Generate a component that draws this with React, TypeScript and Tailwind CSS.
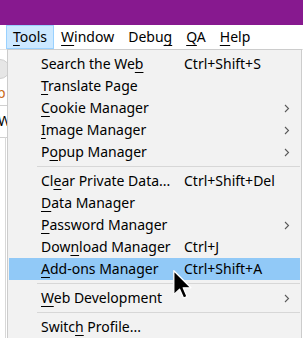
import React from 'react';

type Item =
  | { sep: true }
  | { sep?: false; label: React.ReactNode; shortcut?: string; sub?: boolean; active?: boolean };

const U = ({ children }: { children: React.ReactNode }) => (
  <span className="underline decoration-1 underline-offset-[3px]">{children}</span>
);

const items: Item[] = [
  { label: <>Search the We<U>b</U></>, shortcut: 'Ctrl+Shift+S' },
  { label: <><U>T</U>ranslate Page</> },
  { label: <><U>C</U>ookie Manager</>, sub: true },
  { label: <><U>I</U>mage Manager</>, sub: true },
  { label: <>P<U>o</U>pup Manager</>, sub: true },
  { sep: true },
  { label: <>Cl<U>e</U>ar Private Data...</>, shortcut: 'Ctrl+Shift+Del' },
  { label: <><U>D</U>ata Manager</> },
  { label: <><U>P</U>assword Manager</>, sub: true },
  { label: <>Dow<U>n</U>load Manager</>, shortcut: 'Ctrl+J' },
  { label: <><U>A</U>dd-ons Manager</>, shortcut: 'Ctrl+Shift+A', active: true },
  { sep: true },
  { label: <><U>W</U>eb Development</>, sub: true },
  { sep: true },
  { label: <>Switc<U>h</U> Profile...</> },
];

const Chevron = () => (
  <svg width="6" height="9" viewBox="0 0 6 9" className="text-[#5a5a5a]">
    <path d="M1 1 L4.5 4.5 L1 8" fill="none" stroke="currentColor" strokeWidth="1.1" />
  </svg>
);

export default function App() {
  return (
    <div
      className="relative w-[303px] h-[338px] overflow-hidden bg-white text-black"
      style={{ fontFamily: '"Noto Sans", "Open Sans", sans-serif' }}
    >
      {/* title strip */}
      <div className="h-[25px] bg-[#87198f]" />

      {/* menu bar */}
      <div className="h-[24px] flex items-stretch pl-[6px] text-[14px] leading-none">
        <div className="flex items-center px-[6px] bg-[#cce8ff] border border-[#99d1ff]">
          <span><U>T</U>ools</span>
        </div>
        <div className="flex items-center px-[7px]"><span><U>W</U>indow</span></div>
        <div className="flex items-center px-[7px]"><span>Debu<U>g</U></span></div>
        <div className="flex items-center px-[7px]"><span><U>Q</U>A</span></div>
        <div className="flex items-center px-[7px]"><span><U>H</U>elp</span></div>
      </div>

      {/* content underneath the menu */}
      <div className="relative h-[289px] border-t border-[#e3e3e3] overflow-hidden">
        <div className="absolute left-[-10px] top-[9px] w-[20px] h-[20px] rounded-full bg-[#e6e6e6] border border-[#cfcfcf]" />
        <div className="absolute left-0 top-[36px] w-[7px] h-[16px] overflow-hidden">
          <div className="ml-[-3px] text-[14px] leading-none text-[#c96a1a]">p</div>
        </div>
        <div className="absolute left-0 top-[55px] w-[8px] border-t border-[#d0d0d0]" />
        <div className="absolute left-0 top-[64px] w-[7px] h-[16px] overflow-hidden">
          <div className="ml-[-2px] text-[14px] leading-none">W</div>
        </div>
        <div className="absolute left-0 top-[87px] w-[8px] border-t border-[#d0d0d0]" />
        <div className="absolute left-[5px] top-[87px] h-[202px] border-l border-[#d8d8d8]" />
      </div>

      {/* Tools dropdown */}
      <div className="absolute left-[7px] top-[49px] w-[295px] bg-[#f2f2f2] border border-[#cccccc] pt-[3px] px-[1px] text-[14px] leading-none">
        {items.map((it, i) =>
          it.sep ? (
            <div key={i} className="h-[7px] flex items-center pl-[28px]">
              <div className="flex-1 border-t border-[#d7d7d7]" />
            </div>
          ) : (
            <div
              key={i}
              className={`h-[22px] flex items-center pl-[32px] ${it.active ? 'bg-[#91c9f7]' : ''}`}
            >
              <span className="w-[143px] whitespace-nowrap">{it.label}</span>
              <span className="flex-1 whitespace-nowrap">{it.shortcut}</span>
              <span className="w-[16px] flex items-center">{it.sub && <Chevron />}</span>
            </div>
          )
        )}
      </div>

      {/* mouse pointer */}
      <svg
        className="absolute left-[173px] top-[270px]"
        width="19"
        height="29"
        viewBox="0 0 13 20"
      >
        <path
          d="M0.5 0.5 L0.5 17 L4.5 13.2 L7.2 19.3 L9.6 18.3 L7 12.3 L12.3 12.3 Z"
          fill="#000"
          stroke="#fff"
          strokeWidth="0.9"
          strokeLinejoin="round"
        />
      </svg>
    </div>
  );
}
